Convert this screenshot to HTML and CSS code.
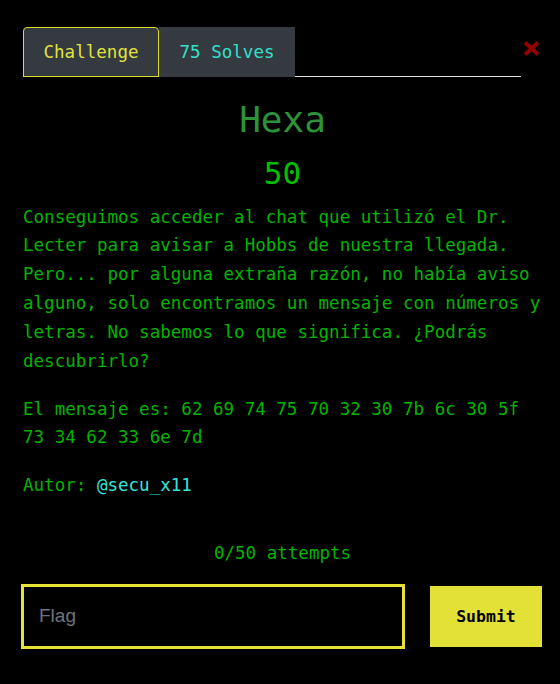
FILE: index.html
```html
<!DOCTYPE html>
<html lang="es">
<head>
<meta charset="utf-8">
<title>Hexa</title>
<link rel="stylesheet" href="styles.css">
</head>
<body>
<div class="modal">
  <div class="header">
    <ul class="tabs">
      <li class="tab active">Challenge</li>
      <li class="tab">75 Solves</li>
    </ul>
    <button class="close" type="button" aria-label="Close">
      <svg width="17" height="15" viewBox="0 0 17 15"><path d="M2 1.5 L15 13.5 M15 1.5 L2 13.5" stroke="#930000" stroke-width="3.8" stroke-linecap="butt"/></svg>
    </button>
  </div>
  <h1 class="title">Hexa</h1>
  <div class="points">50</div>
  <div class="desc">
    <p>Conseguimos acceder al chat que utilizó el Dr. Lecter para avisar a Hobbs de nuestra llegada. Pero... por alguna extraña razón, no había aviso alguno, solo encontramos un mensaje con números y letras. No sabemos lo que significa. ¿Podrás descubrirlo?</p>
    <p>El mensaje es: 62 69 74 75 70 32 30 7b 6c 30 5f 73 34 62 33 6e 7d</p>
    <p>Autor: <a class="author" href="#">@secu_x11</a></p>
  </div>
  <div class="attempts">0/50 attempts</div>
  <form class="submit-row">
    <input class="flag" type="text" placeholder="Flag">
    <button class="submit" type="button">Submit</button>
  </form>
</div>
</body>
</html>
```
FILE: styles.css
```css
html, body {
  margin: 0;
  padding: 0;
  background: #000;
}
body {
  font-family: "DejaVu Sans Mono", monospace;
  font-size: 17.54px;
  line-height: 28.8px;
  color: #00b400;
}
.modal {
  width: 519px;
  margin-left: 23px;
  padding-top: 27px;
}
.header {
  display: flex;
  align-items: flex-start;
  height: 50px;
}
.tabs {
  flex: 1;
  display: flex;
  list-style: none;
  margin: 0;
  padding: 0;
  height: 50px;
  box-sizing: border-box;
  border-bottom: 1px solid #dee2e6;
}
.tab {
  height: 50px;
  box-sizing: border-box;
  padding: 0 19.5px;
  display: flex;
  align-items: center;
  background: #343a40;
  border: 1px solid transparent;
  color: #33e0cc;
  white-space: nowrap;
}
.tab.active {
  border-color: #dcdc2c;
  border-radius: 4px 4px 0 0;
  color: #e2e23c;
}
.close {
  width: 21px;
  height: 15px;
  margin-top: 14px;
  padding: 0 0 0 2px;
  border: 0;
  background: none;
  display: flex;
  justify-content: flex-start;
}
.close svg {
  display: block;
}
.title {
  margin: 21px 0 0;
  text-align: center;
  font-size: 36px;
  line-height: 43.2px;
  font-weight: normal;
  color: #2e9239;
}
.points {
  margin-top: 13.5px;
  text-align: center;
  font-size: 31px;
  line-height: 37.2px;
  color: #00c000;
}
.desc {
  margin-top: 10.7px;
}
.desc p {
  margin: 0 0 19.2px;
}
.desc p:last-child {
  margin-bottom: 0;
}
.author {
  color: #33e6dc;
  text-decoration: none;
}
.attempts {
  margin-top: 38.7px;
  text-align: center;
}
.submit-row {
  display: flex;
  align-items: center;
  gap: 25px;
  margin: 16.3px 0 0 -2px;
}
.flag {
  width: 384px;
  height: 65px;
  box-sizing: border-box;
  border: 3.5px solid #e5e234;
  background: #000;
  padding: 0 0 0 15px;
  font-family: "Liberation Sans", Arial, sans-serif;
  font-size: 19px;
  color: #ccc;
  outline: none;
}
.flag::placeholder {
  color: #6c757d;
}
.submit {
  width: 112px;
  height: 61px;
  border: 0;
  background: #e3e036;
  color: #000;
  font-family: "DejaVu Sans Mono", monospace;
  font-weight: bold;
  font-size: 16.5px;
  padding: 0;
}
```
